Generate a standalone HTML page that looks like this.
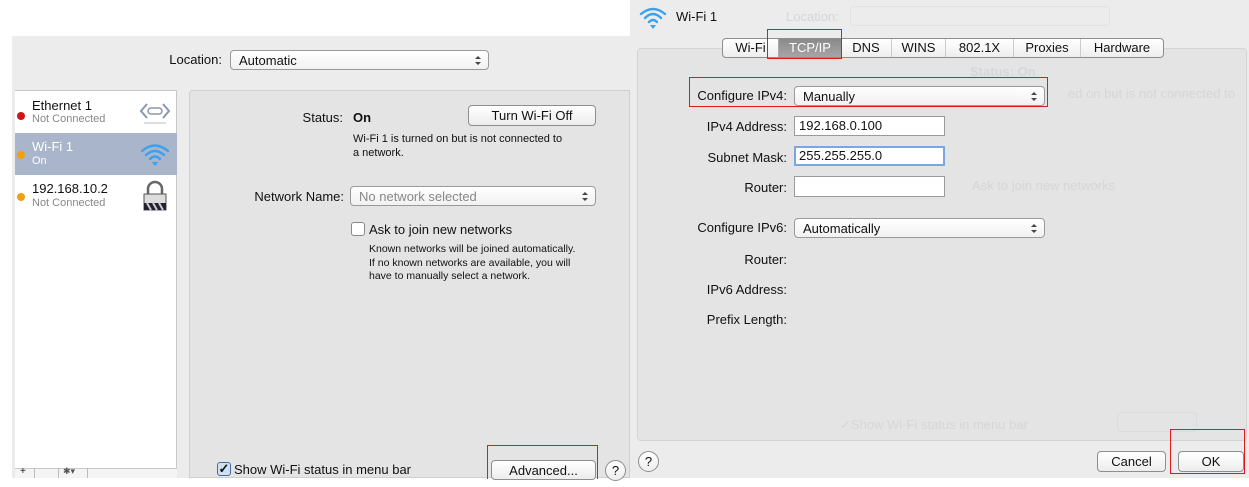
<!DOCTYPE html>
<html><head><meta charset="utf-8"><style>
*{box-sizing:border-box;margin:0;padding:0}
body{width:1249px;height:487px;position:relative;background:#fff;font-family:"Liberation Sans",sans-serif;font-size:13px;color:#111;overflow:hidden}
.a{position:absolute;white-space:nowrap}
.r{text-align:right}
.pop{position:absolute;background:linear-gradient(#fff,#f1f1f1);border:1px solid #9a9a9a;border-radius:4px;padding:1px 0 0 8px;font-size:13px;height:20px;line-height:17px}
.pop:after{content:"";position:absolute;right:7px;top:5px;width:0;height:0;border-left:3px solid transparent;border-right:3px solid transparent;border-bottom:3px solid #444}
.pop:before{content:"";position:absolute;right:7px;top:11px;width:0;height:0;border-left:3px solid transparent;border-right:3px solid transparent;border-top:3px solid #444}
.btn{position:absolute;background:linear-gradient(#fff,#ededed);border:1px solid #8e8e8e;border-radius:4px;text-align:center;font-size:13px;line-height:19px}
.fld{position:absolute;background:#fff;border:1px solid #9a9a9a;padding-left:4px;font-size:13px;line-height:18px}
.red{position:absolute;border:1px solid #e0191b}
.help{position:absolute;width:21px;height:21px;border:1px solid #8e8e8e;border-radius:50%;background:linear-gradient(#fff,#eee);text-align:center;line-height:19px;font-size:13px}
.ghost{color:#d6d6d6}
</style></head><body>
<div class="a" style="left:12px;top:36px;width:618px;height:442px;background:#ececec"></div>
<div class="a r" style="left:100px;top:52px;width:122px">Location:</div>
<div class="pop" style="left:230px;top:50px;width:259px">Automatic</div>
<div class="a" style="left:15px;top:90px;width:162px;height:388px;background:#fff;border-right:1px solid #c8c8c8;border-top:1px solid #c8c8c8"></div>
<div class="a" style="left:15px;top:133px;width:162px;height:42px;background:#a9b5ca"></div>
<div class="a" style="left:17px;top:112px;width:8px;height:8px;border-radius:50%;background:#d11414"></div>
<div class="a" style="left:32px;top:98px">Ethernet 1</div>
<div class="a" style="left:32px;top:113px;font-size:11px;color:#888">Not Connected</div>
<svg class="a" style="left:139px;top:100px" width="32" height="26" viewBox="0 0 32 26"><path d="M8 4 L2 11 L8 18 M24 4 L30 11 L24 18" fill="none" stroke="#8898b0" stroke-width="2"/><rect x="9" y="8" width="14" height="6" rx="3" fill="none" stroke="#8898b0" stroke-width="1.5"/><path d="M5 23 H27" stroke="#ddd" stroke-width="2"/></svg>
<div class="a" style="left:17px;top:151px;width:8px;height:8px;border-radius:50%;background:#f0a010"></div>
<div class="a" style="left:32px;top:139px;color:#fff">Wi-Fi 1</div>
<div class="a" style="left:32px;top:155px;font-size:11px;color:#fff">On</div>
<svg class="a" style="left:139px;top:141px" width="32" height="28" viewBox="0 0 32 28"><g fill="none" stroke="#3aa0f0" stroke-width="2.4" stroke-linecap="round"><path d="M3 10 Q16 -1 29 10"/><path d="M7 14 Q16 6 25 14"/><path d="M11 18 Q16 13 21 18"/></g><path d="M13 21 L19 21 L16 25 Z" fill="#3aa0f0"/></svg>
<div class="a" style="left:17px;top:193px;width:8px;height:8px;border-radius:50%;background:#f0a010"></div>
<div class="a" style="left:32px;top:181px">192.168.10.2</div>
<div class="a" style="left:32px;top:197px;font-size:11px;color:#888">Not Connected</div>
<svg class="a" style="left:142px;top:180px" width="26" height="32" viewBox="0 0 26 32"><path d="M6 14 V9 a7 7 0 0 1 14 0 V14" fill="none" stroke="#666" stroke-width="2.5"/><rect x="2" y="14" width="22" height="16" fill="#ddd" stroke="#555"/><path d="M2 23 L24 23 L24 30 L2 30Z" fill="#223"/><path d="M5 23 L9 30 M11 23 L15 30 M17 23 L21 30" stroke="#ccc" stroke-width="2"/></svg>
<div class="a" style="left:15px;top:468px;width:162px;height:10px;border-top:1px solid #c8c8c8;background:#f4f4f4"></div>
<div class="a" style="left:20px;top:466px;font-size:10px">+</div>
<div class="a" style="left:34px;top:468px;width:1px;height:10px;background:#bbb"></div>
<div class="a" style="left:58px;top:468px;width:1px;height:10px;background:#bbb"></div>
<div class="a" style="left:63px;top:466px;font-size:9px;color:#555">✱▾</div>
<div class="a" style="left:87px;top:468px;width:1px;height:10px;background:#bbb"></div>
<div class="a" style="left:189px;top:90px;width:441px;height:388px;background:#e4e4e4;border:1px solid #cfcfcf;border-radius:4px 0 0 0"></div>
<div class="a r" style="left:250px;top:110px;width:93px">Status:</div>
<div class="a" style="left:353px;top:110px;font-weight:bold">On</div>
<div class="btn" style="left:468px;top:105px;width:128px;height:21px">Turn Wi-Fi Off</div>
<div class="a" style="left:353px;top:132px;font-size:11px;line-height:14px">Wi-Fi 1 is turned on but is not connected to<br>a network.</div>
<div class="a r" style="left:220px;top:189px;width:124px">Network Name:</div>
<div class="pop" style="left:350px;top:186px;width:246px;color:#888">No network selected</div>
<div class="a" style="left:351px;top:222px;width:14px;height:14px;border:1px solid #888;border-radius:3px;background:#fff"></div>
<div class="a" style="left:369px;top:222px">Ask to join new networks</div>
<div class="a" style="left:369px;top:243px;font-size:10.5px;line-height:13.5px">Known networks will be joined automatically.<br>If no known networks are available, you will<br>have to manually select a network.</div>
<div class="a" style="left:217px;top:462px;width:14px;height:14px;border:1px solid #4a6c9a;border-radius:3px;background:#cfe0f4;font-size:13px;line-height:11px;text-align:center;font-weight:bold">✓</div>
<div class="a" style="left:234px;top:462px">Show Wi-Fi status in menu bar</div>
<div class="btn" style="left:491px;top:460px;width:105px;height:20px">Advanced...</div>
<div class="red" style="left:487px;top:445px;width:111px;height:34px;border-bottom:none"></div>
<div class="help" style="left:605px;top:460px">?</div>
<div class="a" style="left:630px;top:0;width:619px;height:478px;background:#ececec"></div>
<svg class="a" style="left:638px;top:5px" width="30" height="27" viewBox="0 0 30 27"><g fill="none" stroke="#3aa0f0" stroke-width="2.4" stroke-linecap="round"><path d="M3 9 Q15 -1 27 9"/><path d="M7 13 Q15 5 23 13"/><path d="M11 17 Q15 13 19 17"/></g><path d="M12 20 L18 20 L15 24 Z" fill="#3aa0f0"/></svg>
<div class="a" style="left:676px;top:9px">Wi-Fi 1</div>
<div class="a ghost" style="left:786px;top:9px">Location:</div>
<div class="a" style="left:850px;top:6px;width:260px;height:20px;border:1px solid #e2e2e2;border-radius:4px"></div>
<div class="a" style="left:637px;top:48px;width:610px;height:393px;background:#e4e4e4;border:1px solid #d4d4d4;border-radius:4px"></div>
<div class="a ghost" style="left:970px;top:64px;font-weight:bold">Status: On</div>
<div class="a ghost" style="left:1068px;top:86px">ed on but is not connected to</div>
<div class="a ghost" style="left:972px;top:178px">Ask to join new networks</div>
<div class="a ghost" style="left:840px;top:417px">✓Show Wi-Fi status in menu bar</div>
<div class="a" style="left:1117px;top:412px;width:80px;height:20px;border:1px solid #dcdcdc;border-radius:4px"></div>
<div class="a" style="left:722px;top:38px;width:442px;height:20px;border:1px solid #8e8e8e;border-radius:4px;background:linear-gradient(#fff,#eee);display:flex;font-size:13px;line-height:18px;overflow:hidden">
<div style="width:56px;text-align:center;border-right:1px solid #aaa">Wi-Fi</div>
<div style="width:62px;text-align:center;background:linear-gradient(#8a8a8a,#a5a5a5);color:#fff">TCP/IP</div>
<div style="width:51px;text-align:center;border-right:1px solid #ccc">DNS</div>
<div style="width:54px;text-align:center;border-right:1px solid #ccc">WINS</div>
<div style="width:68px;text-align:center;border-right:1px solid #ccc">802.1X</div>
<div style="width:67px;text-align:center;border-right:1px solid #ccc">Proxies</div>
<div style="flex:1;text-align:center">Hardware</div>
</div>
<div class="red" style="left:767px;top:29px;width:75px;height:30px"></div>
<div class="a r" style="left:660px;top:88px;width:127px">Configure IPv4:</div>
<div class="pop" style="left:794px;top:86px;width:251px">Manually</div>
<div class="red" style="left:689px;top:77px;width:359px;height:30px"></div>
<div class="a r" style="left:660px;top:119px;width:127px">IPv4 Address:</div>
<div class="fld" style="left:794px;top:116px;width:151px;height:20px">192.168.0.100</div>
<div class="a r" style="left:660px;top:150px;width:127px">Subnet Mask:</div>
<div class="fld" style="left:794px;top:146px;width:151px;height:20px;border:2px solid #7aa7e0;line-height:16px;padding-left:3px">255.255.255.0</div>
<div class="a r" style="left:660px;top:180px;width:127px">Router:</div>
<div class="fld" style="left:794px;top:176px;width:151px;height:21px"></div>
<div class="a r" style="left:660px;top:220px;width:127px">Configure IPv6:</div>
<div class="pop" style="left:794px;top:218px;width:251px">Automatically</div>
<div class="a r" style="left:660px;top:252px;width:127px">Router:</div>
<div class="a r" style="left:660px;top:282px;width:127px">IPv6 Address:</div>
<div class="a r" style="left:660px;top:312px;width:127px">Prefix Length:</div>
<div class="help" style="left:638px;top:451px">?</div>
<div class="btn" style="left:1097px;top:451px;width:69px;height:21px">Cancel</div>
<div class="btn" style="left:1178px;top:451px;width:66px;height:21px">OK</div>
<div class="red" style="left:1170px;top:429px;width:75px;height:45px"></div>
</body></html>
